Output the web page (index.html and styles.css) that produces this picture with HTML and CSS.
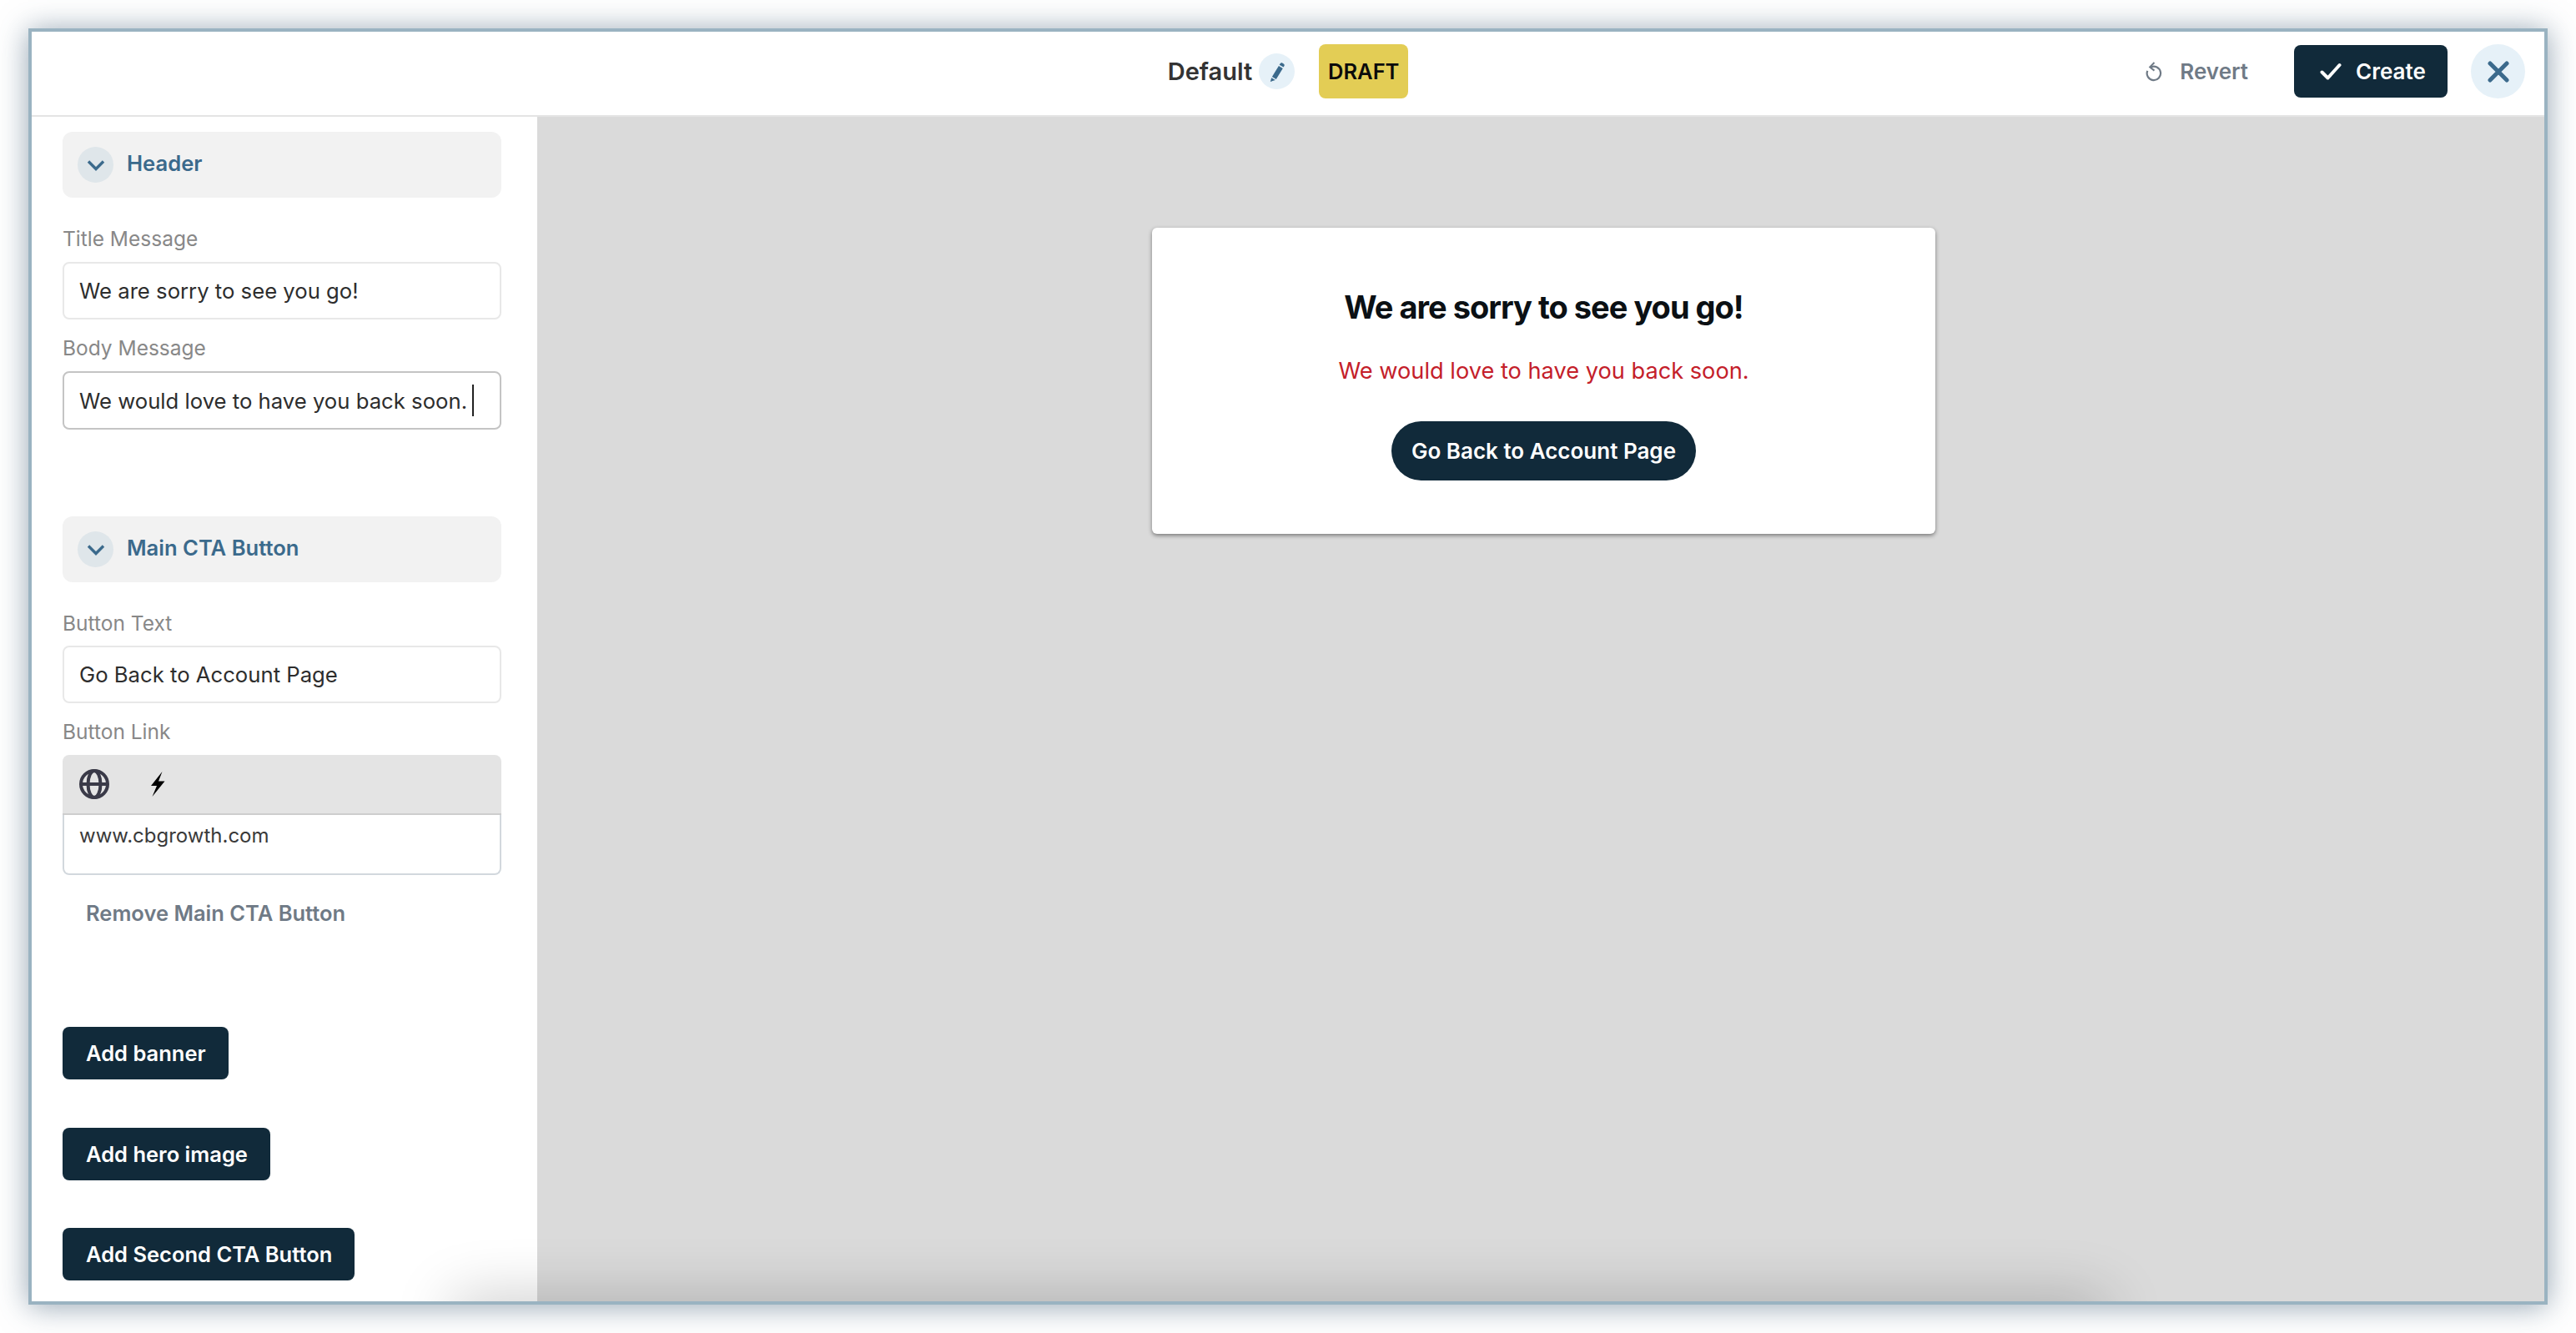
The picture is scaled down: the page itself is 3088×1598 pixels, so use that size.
FILE: index.html
```html
<!DOCTYPE html>
<html lang="en">
<head>
<meta charset="utf-8">
<title>Default</title>
<link rel="stylesheet" href="styles.css">
</head>
<body>
<div class="frame">
  <header class="topbar">
    <div></div>
    <div class="title-group">
      <span class="name">Default</span>
      <span class="edit-circle">
        <svg width="22" height="24" viewBox="0 0 22 24"><path fill="#3b6a8c" d="M14.600 2.200c.6-1 1.700-1.300 2.600-.8l1.600 1c.9.500 1.200 1.700.7 2.600l-.9 1.500-4.900-2.800zM12.900 5.100l4.900 2.800-8 13-4.900-2.800zM4.200 19.200l4.600 2.700L2.800 24z"/></svg>
      </span>
      <span class="badge">DRAFT</span>
    </div>
    <div class="actions">
      <span class="revert">
        <svg width="20" height="24" viewBox="0 0 20 24" fill="none" stroke="#6f7a86" stroke-width="2.200"><path d="M6.200 6.600a8.200 8.200 0 1 1-3.900 4.200"/><path d="M10.500 1 5.200 6.400l5.300 4.200" stroke-width="2"/></svg>
        Revert
      </span>
      <span class="btn create">
        <svg width="26" height="22" viewBox="0 0 26 22" fill="none" stroke="#fff" stroke-width="4" stroke-linecap="round" stroke-linejoin="round"><path d="M2.500 11.500 9.500 18.500 23.500 3"/></svg>
        Create
      </span>
      <span class="close-circle">
        <svg width="26" height="26" viewBox="0 0 26 26" fill="none" stroke="#3b6a8c" stroke-width="5" stroke-linecap="round"><path d="M3 3l20 20M23 3 3 23"/></svg>
      </span>
    </div>
  </header>
  <div class="body">
    <aside class="sidebar">
      <section class="panel panel-header">
        <div class="panel-head">
          <span class="chev"><svg width="22" height="14" viewBox="0 0 22 14" fill="none" stroke="#3b6a8c" stroke-width="3.400"><path d="M2 2.500l9 9 9-9"/></svg></span>
          <span class="panel-title">Header</span>
        </div>
        <div class="label first-label">Title Message</div>
        <div class="field">We are sorry to see you go!</div>
        <div class="label">Body Message</div>
        <div class="field field-active">We would love to have you back soon.<span class="caret"></span></div>
      </section>
      <section class="panel panel-cta">
        <div class="panel-head">
          <span class="chev"><svg width="22" height="14" viewBox="0 0 22 14" fill="none" stroke="#3b6a8c" stroke-width="3.400"><path d="M2 2.500l9 9 9-9"/></svg></span>
          <span class="panel-title">Main CTA Button</span>
        </div>
        <div class="label first-label">Button Text</div>
        <div class="field">Go Back to Account Page</div>
        <div class="label">Button Link</div>
        <div class="link-box">
          <div class="link-tools">
            <svg class="globe" width="36" height="36" viewBox="0 0 36 36" fill="none" stroke="#3a3a48" stroke-width="4"><circle cx="18" cy="18" r="16"/><ellipse cx="18" cy="18" rx="7.500" ry="16"/><path d="M2 18h32"/></svg>
            <svg class="bolt" width="20" height="30" viewBox="0 0 20 30"><path fill="#000" d="M15.500 0 2 17h7L3.500 30 18.500 11.500h-7.500z"/></svg>
          </div>
          <div class="link-value">www.cbgrowth.com</div>
        </div>
        <div class="remove">Remove Main CTA Button</div>
      </section>
      <div class="add-list">
        <span class="btn add">Add banner</span>
        <span class="btn add">Add hero image</span>
        <span class="btn add">Add Second CTA Button</span>
      </div>
    </aside>
    <main class="canvas">
      <div class="card">
        <h1 class="card-title">We are sorry to see you go!</h1>
        <p class="card-body">We would love to have you back soon.</p>
        <span class="pill">Go Back to Account Page</span>
      </div>
    </main>
    <div class="bottom-shadow"></div>
  </div>
</div>
</body>
</html>
```

FILE: styles.css
```css
* { box-sizing: border-box; }
html, body { margin: 0; padding: 0; background: #fff; }
body {
  width: 3088px;
  height: 1598px;
  padding: 34px;
  font-family: Inter, "Liberation Sans", sans-serif;
  overflow: hidden;
}
.frame {
  width: 3020px;
  height: 1530px;
  border: 4px solid #9ab3c1;
  background: #fff;
  box-shadow: 0 2px 34px rgba(60, 90, 115, 0.55);
  display: flex;
  flex-direction: column;
  overflow: hidden;
}
.topbar {
  height: 102px;
  flex: none;
  display: grid;
  grid-template-columns: 1fr auto 1fr;
  align-items: center;
  padding: 0 23px 5px;
  border-bottom: 2px solid #e4e4e4;
}
.title-group { display: flex; align-items: center; }
.name { font-size: 29px; font-weight: 600; color: #333; line-height: 43px; }
.edit-circle {
  width: 43px; height: 43px; border-radius: 50%;
  background: #e6f1f8;
  margin-left: 8px;
  display: flex; align-items: center; justify-content: center;
}
.badge {
  margin-left: 29px;
  width: 107px; height: 65px;
  border-radius: 8px;
  background: #e3cd55;
  color: #0b0b0b;
  font-size: 25.500px; font-weight: 600;
  display: flex; align-items: center; justify-content: center;
}
.actions { display: flex; align-items: center; justify-content: flex-end; }
.revert {
  display: flex; align-items: center; gap: 21px;
  color: #6f7a86;
  font-size: 26px; font-weight: 600;
  margin-right: 55px;
}
.btn {
  display: inline-flex; align-items: center;
  background: #112a3a;
  color: #fff;
  font-weight: 600;
  border-radius: 8px;
}
.create {
  width: 184px; height: 63px;
  font-size: 26px;
  padding-left: 31px;
  gap: 17px;
}
.close-circle {
  width: 65px; height: 65px; border-radius: 50%;
  background: #e6f1f8;
  margin-left: 28px;
  display: flex; align-items: center; justify-content: center;
}
.body { flex: 1; display: flex; position: relative; overflow: hidden; min-height: 0; }
.sidebar {
  width: 606px; flex: none;
  padding: 18px 43px 0 37px;
  background: #fff;
}
.panel-head {
  height: 79px;
  background: #f2f2f2;
  border-radius: 12px;
  display: flex; align-items: center;
  padding-left: 18px;
}
.chev {
  width: 43px; height: 43px; border-radius: 50%;
  background: #dfe6ea;
  display: flex; align-items: center; justify-content: center;
}
.panel-title {
  margin-left: 16px;
  font-size: 25.600px; font-weight: 600;
  color: #3b6a8c;
  line-height: 30px;
  margin-top: -4px;
}
.label {
  font-size: 24.500px;
  color: #888;
  line-height: 30px;
  margin: 19px 0 13px;
}
.first-label { margin-top: 34px; }
.panel-cta .first-label { margin-bottom: 12px; }
.field {
  height: 69px;
  border: 2px solid #e8e8e8;
  border-radius: 8px;
  background: #fff;
  display: flex; align-items: center;
  padding-left: 18px;
  font-size: 25.700px;
  color: #2d2d2d;
  white-space: nowrap;
}
.field-active { border-color: #c4c4c4; height: 70px; }
.caret { width: 2px; height: 38px; background: #222; margin-left: 6px; }
.panel-cta { margin-top: 104px; }
.link-box {
  height: 144px;
  border-radius: 8px;
  background: #fff;
  display: flex; flex-direction: column;
}
.link-tools {
  height: 72px;
  flex: none;
  background: #e4e4e4;
  border-bottom: 2px solid #cdcdcd;
  border-radius: 8px 8px 0 0;
  display: flex; align-items: center;
  padding-left: 20px;
}
.bolt { margin-left: 48px; }
.link-value {
  flex: 1;
  border: 2px solid #d2d8dd;
  border-top: 0;
  border-radius: 0 0 8px 8px;
  font-size: 24px;
  color: #3a3a3a;
  padding: 9px 0 0 18px;
  line-height: 32px;
}
.remove {
  font-size: 25.500px; font-weight: 600;
  color: #6f7a86;
  padding-left: 28px;
  line-height: 30px;
  margin-top: 31px;
}
.add-list {
  display: flex; flex-direction: column; align-items: flex-start;
  gap: 57.500px;
  margin-top: 121px;
}
.add {
  height: 63px;
  padding: 0 27px 0 28px;
  font-size: 25.500px;
  white-space: nowrap;
}
.canvas {
  flex: 1;
  background: #dadada;
  padding: 133px 0 0 7px;
  display: flex;
  flex-direction: column;
  align-items: center;
}
.card {
  width: 939px; height: 367px;
  background: #fff;
  border-radius: 6px;
  box-shadow: 0 2px 5px rgba(0, 0, 0, 0.45);
  display: flex; flex-direction: column; align-items: center;
  padding-top: 72px;
}
.card-title {
  margin: 0;
  font-size: 38px; font-weight: 700;
  color: #0b1014;
  line-height: 46px;
  letter-spacing: -1px;
}
.card-body {
  margin: 36px 0 0;
  font-size: 27.200px;
  color: #c4202a;
  line-height: 36px;
}
.pill {
  margin-top: 42px;
  width: 365px; height: 71px;
  border-radius: 36px;
  background: #112a3a;
  color: #fff;
  font-size: 26px; font-weight: 600;
  display: flex; align-items: center; justify-content: center;
}
.bottom-shadow {
  position: absolute;
  left: 510px; right: 530px; bottom: -50px;
  height: 50px;
  box-shadow: 0 0 70px 4px rgba(0, 0, 0, 0.22);
  pointer-events: none;
}
```
